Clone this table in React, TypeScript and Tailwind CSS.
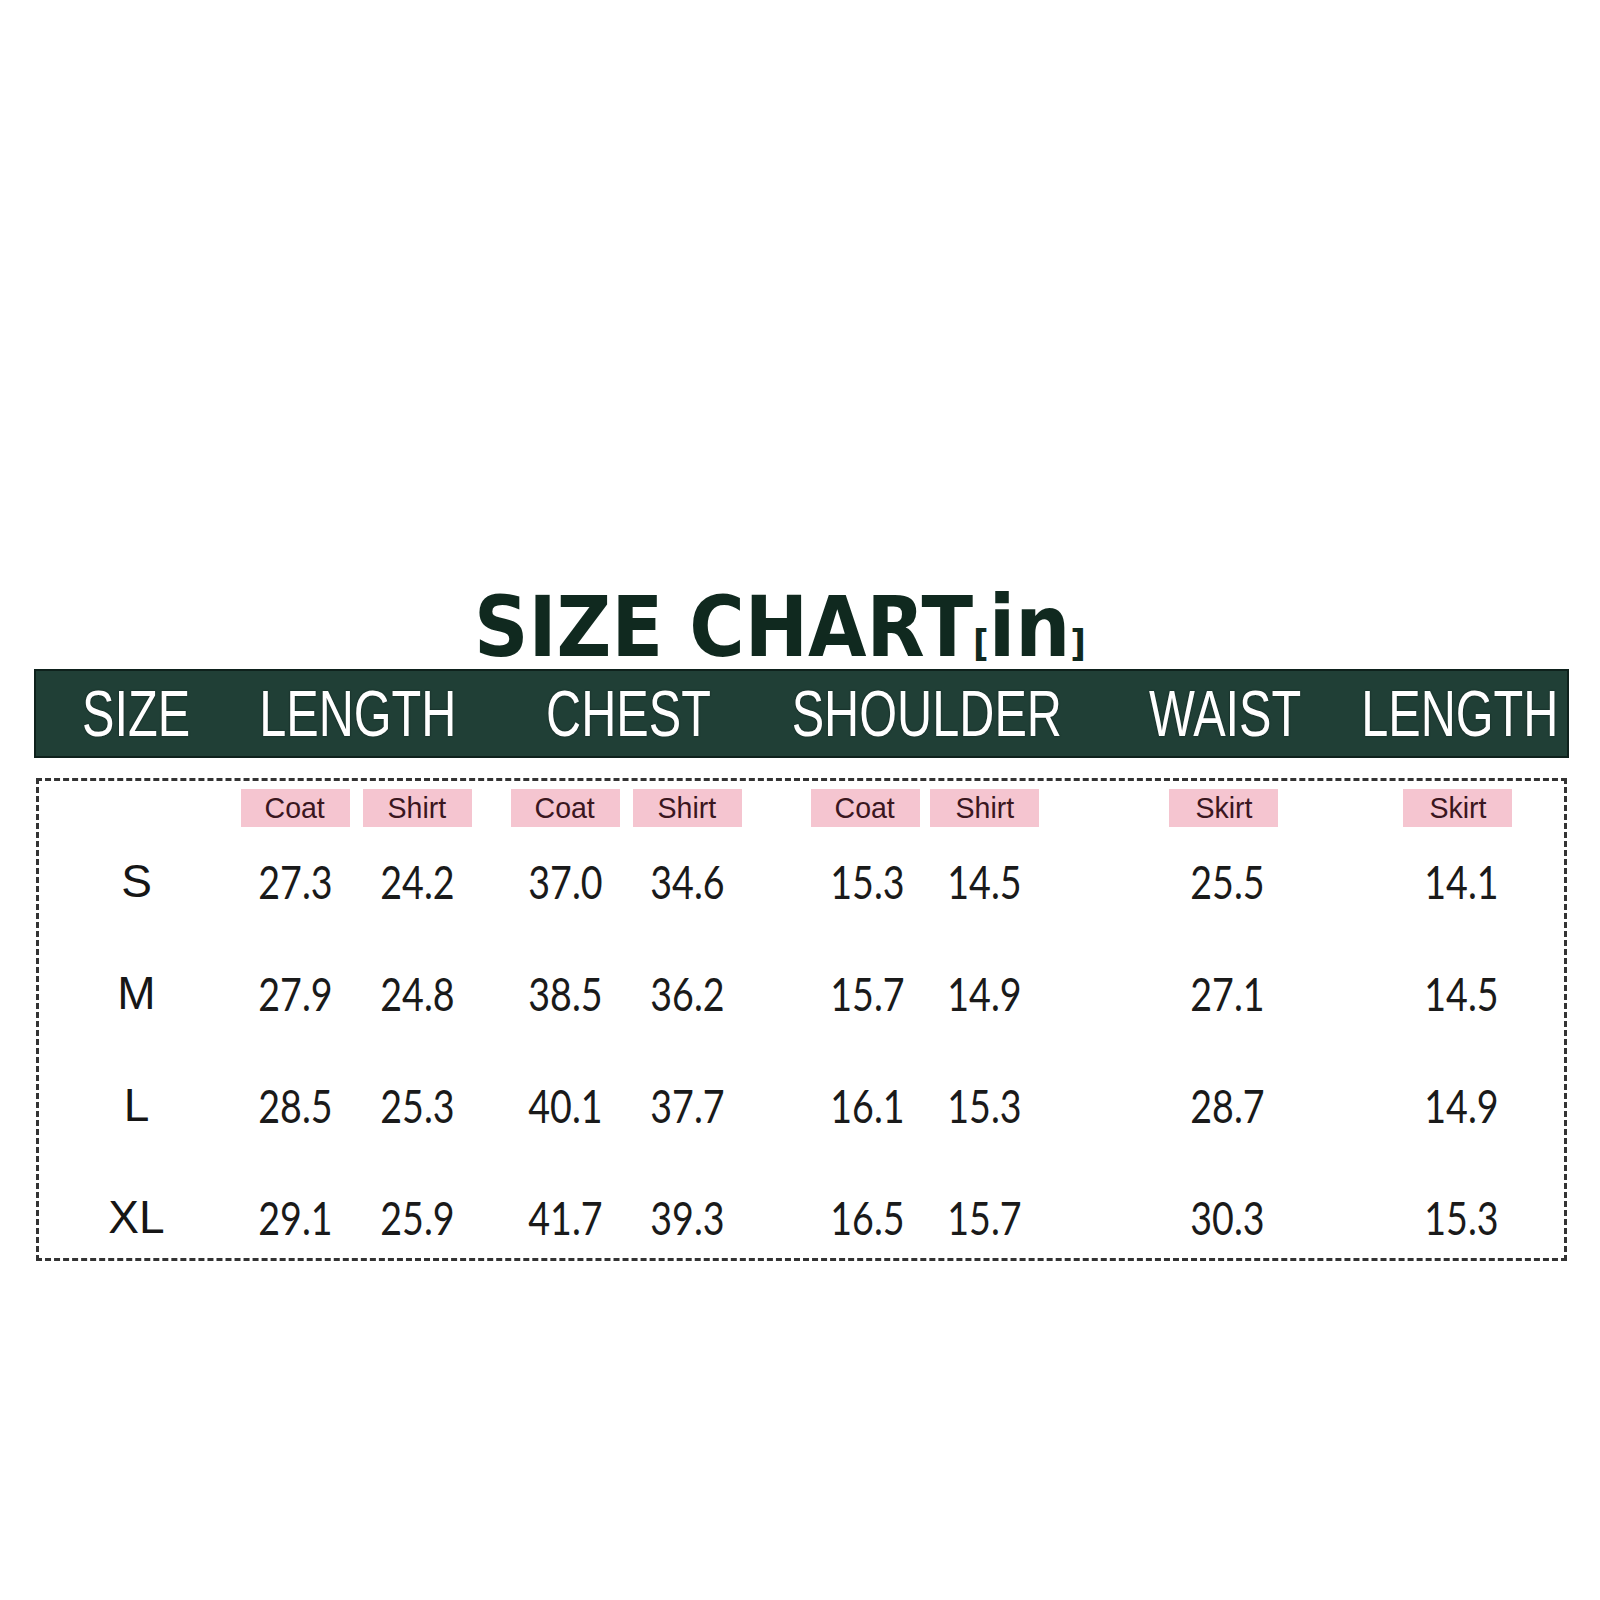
const COLS =
  'grid grid-cols-[200px_122px_122px_26px_122px_122px_57px_120px_119px_57px_245px_223px]';
const BOX_COLS =
  'grid grid-cols-[195px_122px_122px_26px_122px_122px_57px_120px_119px_57px_245px_223px]';

type Row = { size: string; vals: string[] };

const ROWS: Row[] = [
  { size: 'S', vals: ['27.3', '24.2', '37.0', '34.6', '15.3', '14.5', '25.5', '14.1'] },
  { size: 'M', vals: ['27.9', '24.8', '38.5', '36.2', '15.7', '14.9', '27.1', '14.5'] },
  { size: 'L', vals: ['28.5', '25.3', '40.1', '37.7', '16.1', '15.3', '28.7', '14.9'] },
  { size: 'XL', vals: ['29.1', '25.9', '41.7', '39.3', '16.5', '15.7', '30.3', '15.3'] },
];

// grid column (1-based) for each value, gaps skipped
const VAL_COLS = [
  'col-start-2',
  'col-start-3',
  'col-start-5',
  'col-start-6',
  'col-start-8 pl-[4px]',
  'col-start-9',
  'col-start-11 pl-[8px]',
  'col-start-12 pl-[8px]',
];

const TAG_COLS = [
  'col-start-2',
  'col-start-3',
  'col-start-5',
  'col-start-6',
  'col-start-8',
  'col-start-9',
  'col-start-11',
  'col-start-12',
];

const TAGS = ['Coat', 'Shirt', 'Coat', 'Shirt', 'Coat', 'Shirt', 'Skirt', 'Skirt'];

function HeadCell({ label, span }: { label: string; span: string }) {
  return (
    <div className={`${span} flex items-center justify-center`}>
      <span className="inline-block scale-x-[0.76] whitespace-nowrap text-[64px] leading-none text-white [text-shadow:0_0_2px_#0b1a16]">
        {label}
      </span>
    </div>
  );
}

export default function App() {
  return (
    <div className="min-h-[1600px] w-[1600px] bg-white pt-[584px] font-['Liberation_Sans',Arial,sans-serif]">
      <div className="ml-[34px] w-[1535px]">
        {/* title */}
        <div className="h-[84px] pl-[440px]">
          <span className="inline-block origin-left scale-x-[0.9] whitespace-nowrap font-['DejaVu_Sans',Verdana,sans-serif] text-[84px] font-bold leading-[84px] text-[#10291f]">
            SIZE CHART
            <span className="text-[38px]">[</span>
            <span className="text-[86px]">in</span>
            <span className="text-[38px]">]</span>
          </span>
        </div>

        {/* header bar */}
        <div className={`${COLS} mt-px h-[89px] border-2 border-[#0e211c] bg-[#203f36]`}>
          <HeadCell label="SIZE" span="col-start-1" />
          <HeadCell label="LENGTH" span="col-start-2 col-span-2" />
          <HeadCell label="CHEST" span="col-start-5 col-span-2" />
          <HeadCell label="SHOULDER" span="col-start-8 col-span-2" />
          <HeadCell label="WAIST" span="col-start-11" />
          <HeadCell label="LENGTH" span="col-start-12" />
        </div>

        {/* data box */}
        <div className="mx-[2px] mt-[20px] h-[483px] border-[3px] border-dashed border-[#333333] pt-[8px] pb-[6px]">
          <div className={BOX_COLS}>
            {TAGS.map((t, i) => (
              <div key={i} className={`${TAG_COLS[i]} flex justify-center`}>
                <div className="flex h-[38px] w-[109px] items-center justify-center bg-[#f5c5d0]">
                  <span className="inline-block scale-x-95 text-[30px] leading-none text-[#3a1620]">
                    {t}
                  </span>
                </div>
              </div>
            ))}
          </div>

          <div className="mt-[19px] flex flex-col gap-[42px]">
            {ROWS.map((r) => (
              <div key={r.size} className={`${BOX_COLS} h-[70px] items-center`}>
                <div className="col-start-1 flex justify-center">
                  <span className="inline-block text-[46px] leading-none text-[#161616]">
                    {r.size}
                  </span>
                </div>
                {r.vals.map((v, i) => (
                  <div key={i} className={`${VAL_COLS[i]} flex justify-center`}>
                    <span className="inline-block scale-x-[0.8] font-['Lato',sans-serif] text-[47px] leading-none text-[#1a1a1a]">
                      {v}
                    </span>
                  </div>
                ))}
              </div>
            ))}
          </div>
        </div>
      </div>
    </div>
  );
}
